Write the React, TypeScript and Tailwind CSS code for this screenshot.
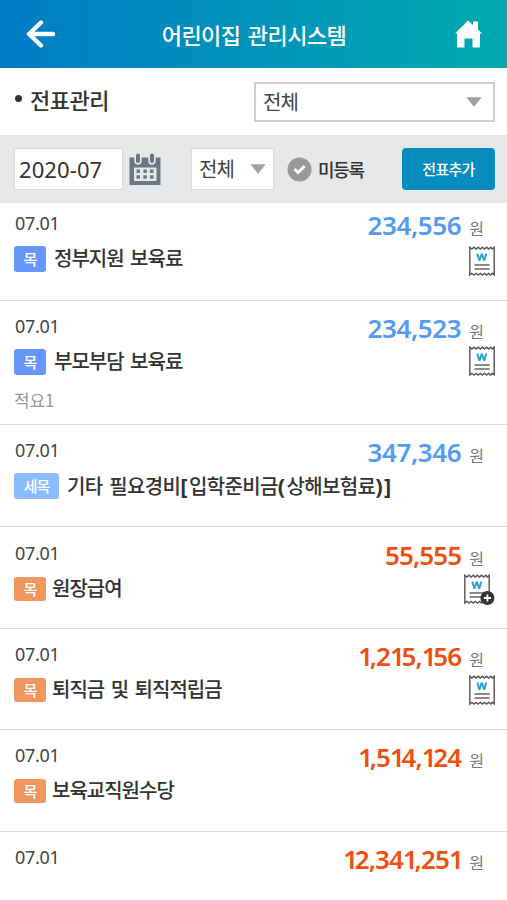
type Entry = {
  kind: "목" | "세목";
  title: string;
  amount: string;
  income: boolean;
  note?: string;
  receipt?: "saved" | "add";
  box: string;
};

const entries: Entry[] = [
  { kind: "목", title: "정부지원 보육료", amount: "234,556", income: true, receipt: "saved", box: "h-[98px] pt-[10px]" },
  { kind: "목", title: "부모부담 보육료", amount: "234,523", income: true, note: "적요1", receipt: "saved", box: "h-[124px] pt-[15px]" },
  { kind: "세목", title: "기타 필요경비[입학준비금(상해보험료)]", amount: "347,346", income: true, box: "h-[102px] pt-[15px]" },
  { kind: "목", title: "원장급여", amount: "55,555", income: false, receipt: "add", box: "h-[102px] pt-[16px]" },
  { kind: "목", title: "퇴직금 및 퇴직적립금", amount: "1,215,156", income: false, receipt: "saved", box: "h-[101px] pt-[15px]" },
  { kind: "목", title: "보육교직원수당", amount: "1,514,124", income: false, box: "h-[102px] pt-[15px]" },
  { kind: "목", title: "", amount: "12,341,251", income: false, box: "h-[69px] pt-[15px]" },
];

function ReceiptIcon({ add }: { add: boolean }) {
  return (
    <svg width="31" height="31" viewBox="0 0 31 31" fill="none" className={add ? "" : "-mr-[5px]"}>
      <path
        d="M.8 1.2 L2.9 3 L5 1.2 L7.1 3 L9.2 1.2 L11.3 3 L13.4 1.2 L15.5 3 L17.6 1.2 L19.7 3 L21.8 1.2 L23.3 3 L25.2 1.2 V29 L23.3 27.3 L21.8 29 L19.7 27.3 L17.6 29 L15.5 27.3 L13.4 29 L11.3 27.3 L9.2 29 L7.1 27.3 L5 29 L2.9 27.3 L.8 29 Z"
        stroke="#555"
        strokeWidth="1.4"
      />
      <path d="M8.3 7.5 L10.4 14.6 L12.8 7.5 L15.2 14.6 L17.3 7.5" stroke="#27a9d3" strokeWidth="2" strokeLinejoin="bevel" />
      <path d="M5.5 19 H20.7 M5.5 23 H20.7" stroke="#666" strokeWidth="1.4" />
      {add && (
        <>
          <circle cx="23.4" cy="24" r="7" fill="#333" />
          <path d="M23.4 20.4 V27.6 M19.8 24 H27" stroke="#fff" strokeWidth="1.8" />
        </>
      )}
    </svg>
  );
}

function CalendarIcon() {
  return (
    <svg width="32" height="32" viewBox="0 0 32 32">
      <path d="M.5 4.5 H31.5 V32 H.5 Z" fill="#6d7783" />
      <path d="M5 14.5 H27.5 V28 H5 Z" fill="#e6e8ea" />
      <path d="M9 3 V8 M23 3 V8" stroke="#e6e8ea" strokeWidth="7.4" strokeLinecap="round" />
      <path d="M9 2.5 V8 M23 2.5 V8" stroke="#6d7783" strokeWidth="4" strokeLinecap="round" />
      <path d="M7.5 18.2 H11 M14.3 18.2 H17.8 M21 18.2 H24.5 M7.5 24 H11 M14.3 24 H17.8 M21 24 H24.5" stroke="#6d7783" strokeWidth="3.6" />
    </svg>
  );
}

function Caret() {
  return (
    <svg width="16" height="10" viewBox="0 0 16 10">
      <path d="M.3 .3 H15.7 L8 9.8 Z" fill="#a0a0a0" />
    </svg>
  );
}

// the digit 1 is set tighter than the other figures
function Amount({ value }: { value: string }) {
  return (
    <>
      {value.split("").map((char, i) => (
        <span key={i} className={char === "1" ? (i === value.length - 1 ? "tracking-[-2.5px]" : "tracking-[-3.4px]") : ""}>
          {char}
        </span>
      ))}
    </>
  );
}

function Title({ text }: { text: string }) {
  return (
    <>
      {text.split(/([[\]()])/).map((part, i) => (
        <span key={i} className={i % 2 ? "font-['Noto_Sans'] text-[22px] font-bold tracking-[1.3px]" : ""}>
          {part}
        </span>
      ))}
    </>
  );
}

function EntryRow({ entry }: { entry: Entry }) {
  const badge = entry.kind === "세목" ? "w-[45px] h-[26px] bg-[#8bbcff]" : entry.income ? "w-8 h-[26px] bg-[#6796ff]" : "w-8 h-6 bg-[#f0965f]";

  return (
    <li className={`flex items-start justify-between border-b border-[#dcdcdc] pl-[14px] pr-3 last:border-b-0 ${entry.box}`}>
      <div className="w-0 min-w-0 flex-1">
        <p className="h-5 pl-px font-['Noto_Sans'] text-[18px] leading-5 tracking-[-0.3px] text-[#444]">07.01</p>
        {entry.title && (
          <div className={`mt-[13px] flex h-[26px] items-center ${entry.income ? "gap-2" : "gap-1.5"}`}>
            <span className={`flex shrink-0 items-center justify-center rounded-[3px] text-[15px] font-medium tracking-[-1px] text-white ${badge}`}>
              {entry.kind}
            </span>
            <span
              className={`-mt-[2px] whitespace-nowrap text-[20px] font-medium leading-[26px] text-[#333] [word-spacing:3px] ${
                entry.kind === "세목" ? "tracking-[-0.65px]" : "tracking-[-1px]"
              }`}
            >
              <Title text={entry.title} />
            </span>
          </div>
        )}
        {entry.note && <p className="mt-[15px] h-5 text-[17px] leading-5 tracking-[-0.2px] text-[#999]">{entry.note}</p>}
      </div>
      <div className="flex shrink-0 flex-col items-end">
        <p className="flex h-6 items-center pr-[11px]">
          <span
            className={`font-['Noto_Sans'] text-[26px] font-semibold leading-[26px] ${
              entry.income ? "tracking-[-0.4px] text-[#539bf5]" : "tracking-[-0.9px] text-[#f0500f]"
            }`}
          >
            <Amount value={entry.amount} />
          </span>
          <span className="ml-2 mt-1.5 text-[16px] leading-5 text-[#777]">원</span>
        </p>
        {entry.receipt && (
          <div className={entry.income && !entry.note ? "mt-[9px]" : entry.income ? "mt-[6px]" : "mt-[7px]"}>
            <ReceiptIcon add={entry.receipt === "add"} />
          </div>
        )}
      </div>
    </li>
  );
}

export default function App() {
  return (
    <main className="h-[900px] w-[507px] overflow-hidden bg-white font-['Noto_Sans_CJK_KR',sans-serif]">
      <header className="flex h-[68px] items-center justify-between bg-linear-to-r from-[#007bc6] to-[#00a9ad] pl-[26px] pr-[25px] text-white">
        <svg width="30" height="28" viewBox="0 0 30 28" fill="none" stroke="currentColor" strokeWidth="4.4" strokeLinecap="round" strokeLinejoin="round">
          <path d="M15 2.5 L3 14 L15 25.5 M3 14 H27" />
        </svg>
        <h1 className="-ml-[3px] whitespace-nowrap text-[22px] font-medium tracking-[-0.55px] [word-spacing:3px]">어린이집 관리시스템</h1>
        <svg width="27" height="28" viewBox="0 0 27 28" fill="currentColor">
          <path d="M13 0.5 L18 5 V1.5 H23 V9.5 L27 13.5 H25 V27.5 H17.5 V18.5 H9.5 V27.5 H2 V13.5 H0 Z" />
        </svg>
      </header>

      <section className="flex h-[67px] items-center justify-between pl-[14px] pr-3">
        <h2 className="-mt-[5px] flex items-center gap-2 text-[22px] font-medium tracking-[-0.5px] text-[#333]">
          <span className="-mt-0.5 ml-px size-[7px] rounded-full bg-[#333]" />
          전표관리
        </h2>
        <button className="flex h-10 w-[241px] items-center justify-between border-2 border-[#d0d0d0] pl-[7px] pr-[11px] text-[20px] tracking-[-1px] text-[#444]">
          전체
          <Caret />
        </button>
      </section>

      <section className="flex h-[68px] items-center bg-[#e6e8ea] pl-[14px] pr-3">
        <div className="flex h-[42px] w-[109px] items-center border border-[#d8dadc] bg-white pl-1 font-['Noto_Sans'] text-[22px] tracking-[0.1px] text-[#333]">
          2020-07
        </div>
        <div className="ml-[6px]">
          <CalendarIcon />
        </div>
        <button className="ml-[30px] flex h-[42px] w-[83px] items-center justify-between border border-[#d8dadc] bg-white pl-[7px] pr-[7px] text-[20px] tracking-[-1px] text-[#444]">
          전체
          <Caret />
        </button>
        <div className="ml-[13px] flex items-center gap-[6px] text-[18px] font-medium tracking-[-1.3px] text-[#333]">
          <svg width="25" height="25" viewBox="0 0 25 25" fill="none">
            <circle cx="12.5" cy="12.5" r="12" fill="#999" />
            <path d="M7.5 12 L11 15.5 L17.7 9" stroke="#fff" strokeWidth="3" />
          </svg>
          미등록
        </div>
        <button className="ml-auto h-[42px] w-[93px] rounded-[4px] bg-[#078dbd] text-[15px] font-medium tracking-[-0.7px] text-white">
          전표추가
        </button>
      </section>

      <ul>
        {entries.map((entry) => (
          <EntryRow key={entry.amount} entry={entry} />
        ))}
      </ul>
    </main>
  );
}
